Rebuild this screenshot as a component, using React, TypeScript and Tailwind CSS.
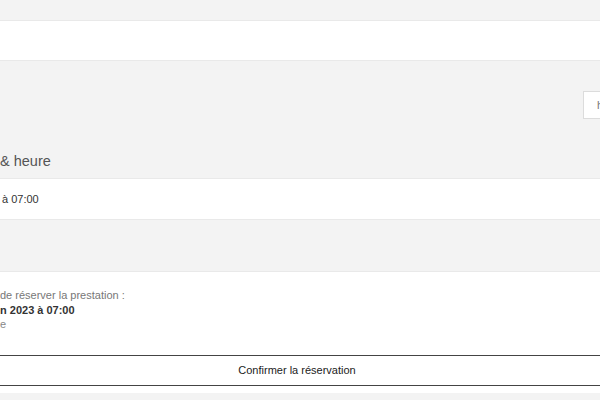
import React from "react";

export default function App() {
  return (
    <div
      className="w-[600px] h-[400px] overflow-hidden bg-[#f3f3f3] text-[#333]"
      style={{ fontFamily: '"Liberation Sans", Arial, sans-serif' }}
    >
      <div className="h-[20px]" />
      <div className="h-[41px] bg-white border-y border-[#e9e9e9]" />

      <div className="h-[117px] flex flex-col">
        <div className="mt-[30px] flex justify-end">
          <div className="w-[17px] h-[28px] bg-white border-l border-y border-[#dcdcdc] pl-[13px] text-[11px] leading-[26px] text-[#777] overflow-hidden whitespace-nowrap">
            h
          </div>
        </div>
        <div className="mt-[31px] h-[22px] leading-[22px] text-[14.5px] text-[#555]">& heure</div>
      </div>

      <div className="h-[42px] bg-white border-y border-[#e9e9e9] flex items-center pl-[2px] text-[11px] text-[#333]">
        à 07:00
      </div>

      <div className="h-[51px]" />

      <div className="h-[122px] bg-white border-t border-[#e9e9e9] flex flex-col">
        <div className="pt-[16px] flex flex-col text-[11px] leading-[14.5px]">
          <span className="text-[#777]">de réserver la prestation :</span>
          <span className="font-bold text-[#333]">n 2023 à 07:00</span>
          <span className="text-[#888]">e</span>
        </div>
        <button className="mt-[23px] h-[31px] w-full border-y border-[#444] bg-white text-[11px] text-[#222] flex items-center justify-center pr-[6px]">
          Confirmer la réservation
        </button>
      </div>
    </div>
  );
}
